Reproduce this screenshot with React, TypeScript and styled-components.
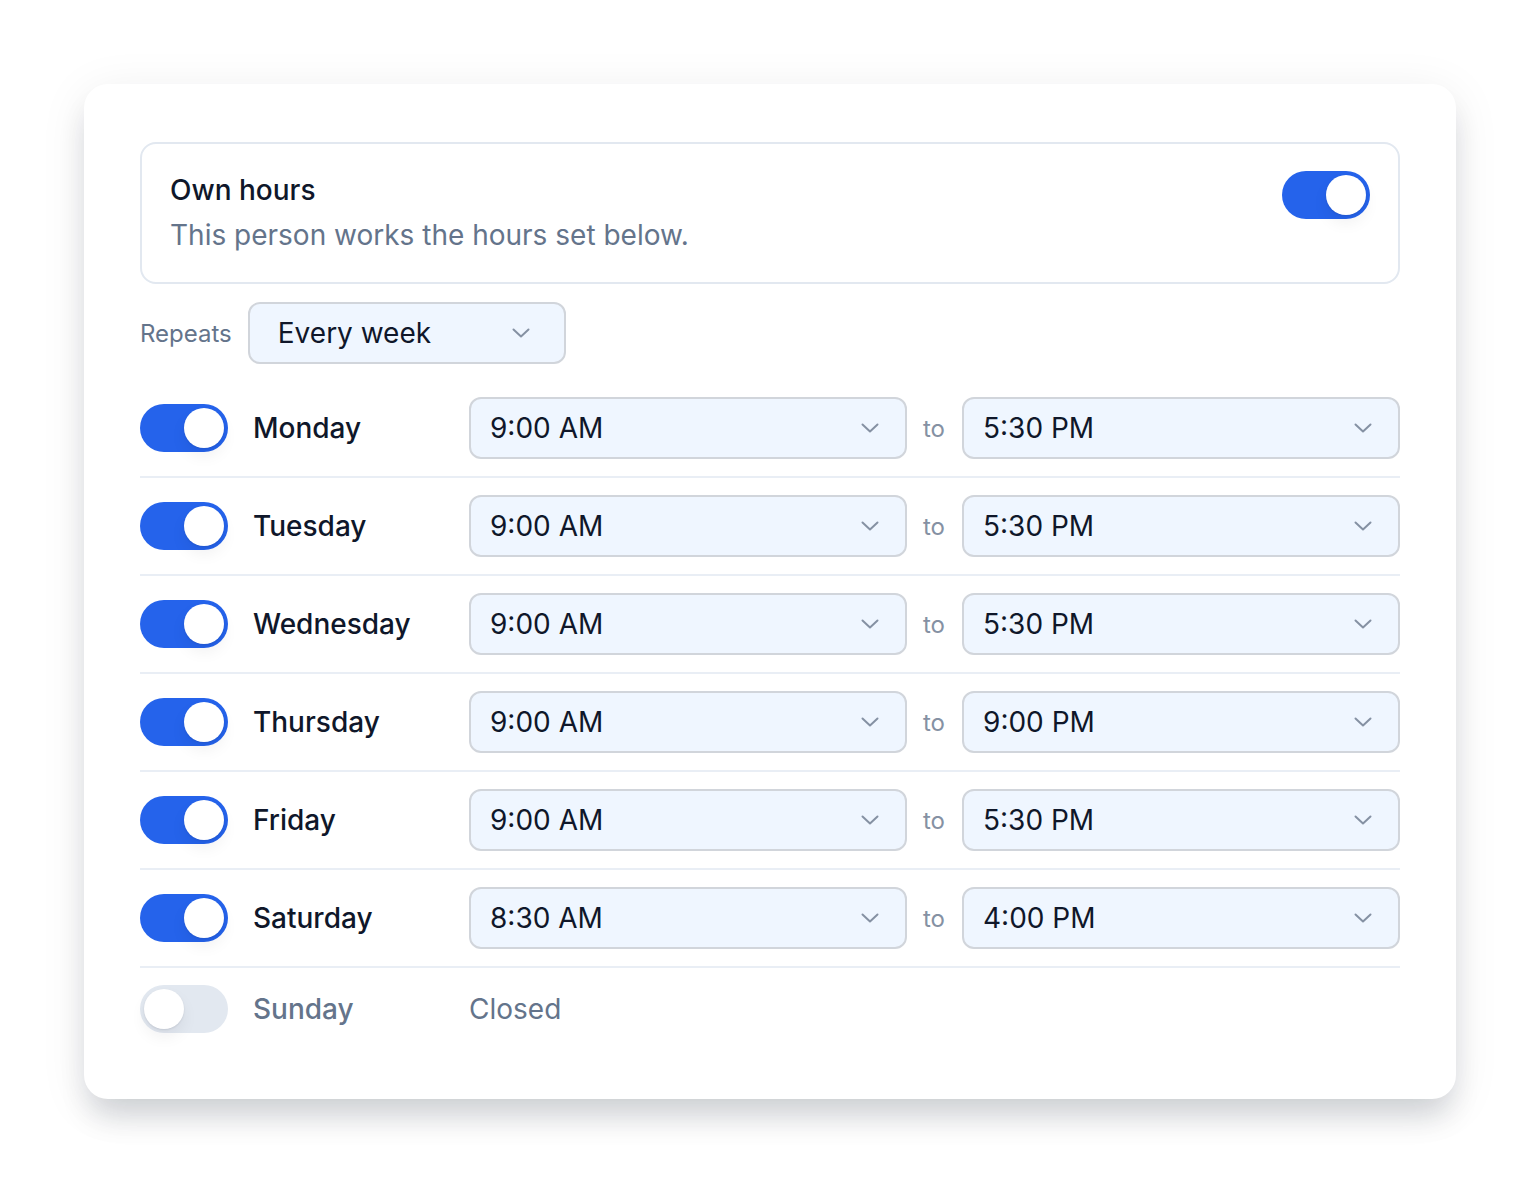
import React, { useState } from 'react';
import styled, { createGlobalStyle } from 'styled-components';

const GlobalStyle = createGlobalStyle`
    body {
        margin: 0;
        background: #ffffff;
        font-family: Inter, 'Noto Sans', 'Liberation Sans', sans-serif;
        color: #0f172a;
    }
`;

const Page = styled.div`
    padding: 84px 84px 104px;
`;

const Card = styled.div`
    background: #ffffff;
    border-radius: 24px;
    padding: 58px 56px 49px;
    box-shadow: 0 22px 30px -6px rgba(15, 23, 42, 0.16), 0 8px 48px rgba(15, 23, 42, 0.08);
`;

const OwnHoursBox = styled.div`
    display: flex;
    justify-content: space-between;
    align-items: flex-start;
    border: 2px solid #e2e8f0;
    border-radius: 16px;
    padding: 27px 28px 27px 28px;
`;

const Title = styled.div`
    font-size: 28px;
    font-weight: 500;
    line-height: 39px;
    color: #0f172a;
`;

const Subtitle = styled.div`
    margin-top: 6px;
    font-size: 28px;
    line-height: 39px;
    color: #64748b;
`;

const Track = styled.button<{ on: boolean }>`
    position: relative;
    flex: none;
    width: 88px;
    height: 48px;
    border: none;
    padding: 0;
    border-radius: 24px;
    background: ${(p) => (p.on ? '#2563eb' : '#e2e8f0')};
    cursor: pointer;
`;

const Knob = styled.span<{ on: boolean }>`
    position: absolute;
    top: 4px;
    left: ${(p) => (p.on ? '44px' : '4px')};
    width: 40px;
    height: 40px;
    border-radius: 50%;
    background: #ffffff;
    box-shadow: 0 8px 16px rgba(15, 23, 42, 0.06), 0 1px 2px rgba(15, 23, 42, 0.1);
`;

const RepeatsRow = styled.div`
    display: flex;
    align-items: center;
    gap: 16px;
    margin-top: 18px;
`;

const FieldLabel = styled.span`
    font-size: 24px;
    color: #64748b;
`;

const Select = styled.div<{ width?: number }>`
    display: flex;
    align-items: center;
    justify-content: space-between;
    box-sizing: border-box;
    height: 62px;
    width: ${(p) => (p.width ? `${p.width}px` : 'auto')};
    flex: ${(p) => (p.width ? 'none' : '1 1 0')};
    padding: 0 26px 0 19px;
    background: #eff6ff;
    border: 2px solid #d1d5db;
    border-radius: 12px;
    font-size: 28px;
    color: #0f172a;
`;

const RepeatsSelect = styled(Select)`
    padding-left: 28px;
    padding-right: 34px;
`;

const DayList = styled.div`
    margin-top: 16px;
`;

const DayRow = styled.div`
    display: flex;
    align-items: center;
    padding: 17px 0;
    border-bottom: 2px solid #e9eef5;

    &:last-child {
        border-bottom: none;
    }
`;

const DayName = styled.span<{ off?: boolean }>`
    width: 216px;
    margin-left: 25px;
    font-size: 28px;
    font-weight: 500;
    color: ${(p) => (p.off ? '#64748b' : '#0f172a')};
`;

const To = styled.span`
    padding: 0 17px 0 16px;
    font-size: 24px;
    color: #8591a3;
`;

const Closed = styled.span`
    font-size: 28px;
    color: #64748b;
`;

const Chevron = () => (
    <svg width="18" height="10" viewBox="0 0 18 10" fill="none">
        <path d="M1.5 1.5l7.5 7 7.5-7" stroke="#8591a3" strokeWidth="2" strokeLinecap="round" strokeLinejoin="round" />
    </svg>
);

const Toggle = ({ on, onClick }: { on: boolean; onClick?: () => void }) => (
    <Track type="button" on={on} onClick={onClick}>
        <Knob on={on} />
    </Track>
);

type Day = { name: string; on: boolean; from: string; to: string };

const initialDays: Day[] = [
    { name: 'Monday', on: true, from: '9:00 AM', to: '5:30 PM' },
    { name: 'Tuesday', on: true, from: '9:00 AM', to: '5:30 PM' },
    { name: 'Wednesday', on: true, from: '9:00 AM', to: '5:30 PM' },
    { name: 'Thursday', on: true, from: '9:00 AM', to: '9:00 PM' },
    { name: 'Friday', on: true, from: '9:00 AM', to: '5:30 PM' },
    { name: 'Saturday', on: true, from: '8:30 AM', to: '4:00 PM' },
    { name: 'Sunday', on: false, from: '9:00 AM', to: '5:30 PM' },
];

export default function App() {
    const [ownHours, setOwnHours] = useState(true);
    const [days, setDays] = useState(initialDays);

    const toggleDay = (i: number) => {
        setDays((d) => d.map((day, j) => (j === i ? { ...day, on: !day.on } : day)));
    };

    return (
        <>
            <GlobalStyle />
            <Page>
                <Card>
                    <OwnHoursBox>
                        <div>
                            <Title>Own hours</Title>
                            <Subtitle>This person works the hours set below.</Subtitle>
                        </div>
                        <Toggle on={ownHours} onClick={() => setOwnHours((v) => !v)} />
                    </OwnHoursBox>

                    <RepeatsRow>
                        <FieldLabel>Repeats</FieldLabel>
                        <RepeatsSelect width={318}>
                            Every week
                            <Chevron />
                        </RepeatsSelect>
                    </RepeatsRow>

                    <DayList>
                        {days.map((day, i) => (
                            <DayRow key={day.name}>
                                <Toggle on={day.on} onClick={() => toggleDay(i)} />
                                <DayName off={!day.on}>{day.name}</DayName>
                                {day.on ? (
                                    <>
                                        <Select>
                                            {day.from}
                                            <Chevron />
                                        </Select>
                                        <To>to</To>
                                        <Select>
                                            {day.to}
                                            <Chevron />
                                        </Select>
                                    </>
                                ) : (
                                    <Closed>Closed</Closed>
                                )}
                            </DayRow>
                        ))}
                    </DayList>
                </Card>
            </Page>
        </>
    );
}
